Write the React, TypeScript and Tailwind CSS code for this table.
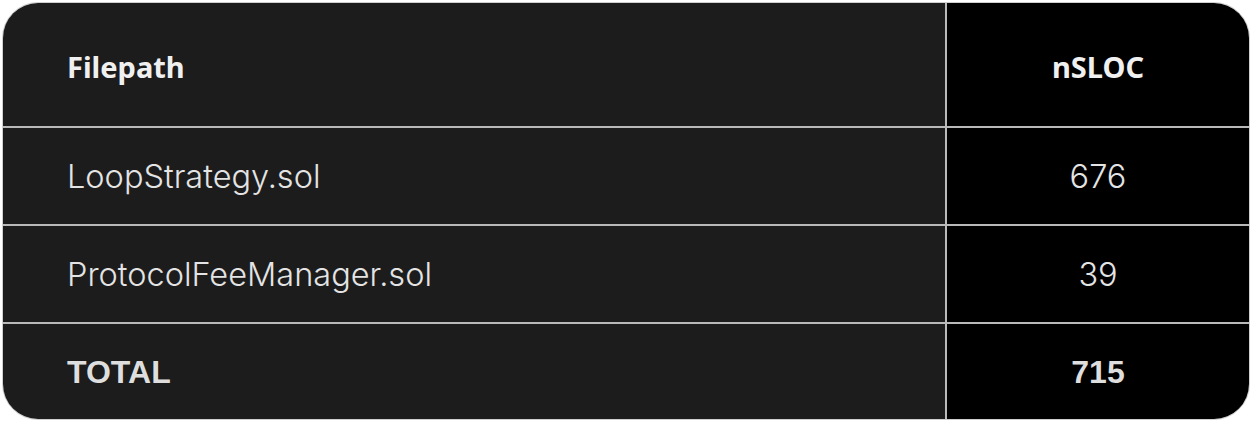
const rows = [
  { file: "LoopStrategy.sol", nsloc: "676" },
  { file: "ProtocolFeeManager.sol", nsloc: "39" },
];

export default function App() {
  return (
    <div className="w-[1252px] h-[422px] bg-white p-[2px]">
      <div className="h-full w-full rounded-[36px] border border-[#cfcfcf] overflow-hidden grid grid-cols-[944px_1fr] grid-rows-[125px_98px_98px_1fr] font-['Inter',sans-serif]">
        {/* Header */}
        <div className="bg-[#1c1c1c] flex items-center pl-[64px] pt-[4px] border-r-2 border-b-2 border-[#b9b9b9]">
          <span className="font-['Noto_Sans',sans-serif] font-bold text-[29px] text-[#f0f0f0]">Filepath</span>
        </div>
        <div className="bg-black flex items-center justify-center pt-[4px] border-b-2 border-[#b9b9b9]">
          <span className="font-['Noto_Sans',sans-serif] font-bold text-[29px] text-[#f0f0f0]">nSLOC</span>
        </div>

        {rows.map((r) => (
          <>
            <div key={r.file} className="bg-[#1c1c1c] flex items-center pl-[64px] pt-[2px] border-r-2 border-b-2 border-[#b9b9b9]">
              <span className="text-[32.5px] font-light text-[#e4e4e4]">{r.file}</span>
            </div>
            <div key={r.file + "-n"} className="bg-black flex items-center justify-center pt-[2px] border-b-2 border-[#b9b9b9]">
              <span className="text-[32.5px] font-light text-[#e4e4e4]">{r.nsloc}</span>
            </div>
          </>
        ))}

        {/* Total */}
        <div className="bg-[#1c1c1c] flex items-center pl-[64px] border-r-2 border-[#b9b9b9]">
          <span className="font-['Liberation_Sans',sans-serif] font-bold text-[32px] text-[#dedede]">TOTAL</span>
        </div>
        <div className="bg-black flex items-center justify-center">
          <span className="font-['Liberation_Sans',sans-serif] font-bold text-[32px] text-[#dedede]">715</span>
        </div>
      </div>
    </div>
  );
}
